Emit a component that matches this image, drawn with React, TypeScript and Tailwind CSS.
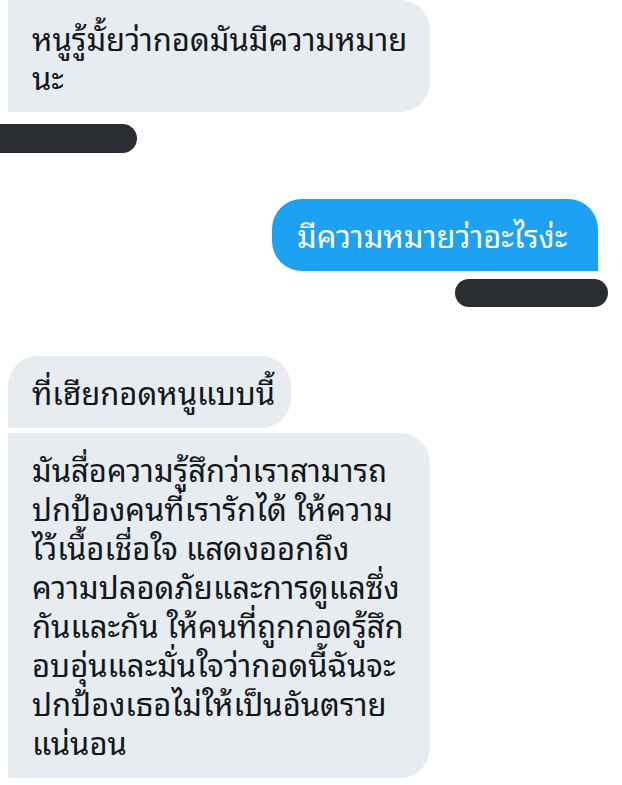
import React from "react";

const font = { fontFamily: '"Noto Sans Thai Looped", "Noto Serif Thai", Waree, Loma, Garuda, "Tlwg Typo", "Noto Sans Thai", "Noto Sans", sans-serif' };

function Lines({ lines }: { lines: string[] }) {
  return (
    <>
      {lines.map((l, i) => (
        <span key={i} className="block whitespace-nowrap">
          {l}
        </span>
      ))}
    </>
  );
}

export default function App() {
  return (
    <div
      className="w-[622px] h-[785px] bg-white overflow-hidden flex flex-col text-[31px] leading-[39px] text-[#14171a]"
      style={font}
    >
      <div className="ml-[8px] w-[422px] h-[112px] bg-[#e6ecf0] rounded-tr-[30px] rounded-br-[30px] px-[24px] pt-[18px]">
        <Lines lines={["หนูรู้มั้ยว่ากอดมันมีความหมาย", "นะ"]} />
      </div>
      <div className="mt-[12px] w-[137px] h-[29px] bg-[#292d31] rounded-r-full" />

      <div className="mt-[46px] self-end mr-[24px] w-[326px] h-[72px] bg-[#1da1f2] text-white rounded-tl-[30px] rounded-tr-[30px] rounded-bl-[30px] px-[25px] pt-[16px]">
        <Lines lines={["มีความหมายว่าอะไรง่ะ"]} />
      </div>
      <div className="mt-[8px] self-end mr-[14px] w-[153px] h-[28px] bg-[#292d31] rounded-full" />

      <div className="mt-[49px] ml-[8px] w-[283px] h-[72px] bg-[#e6ecf0] rounded-tl-[30px] rounded-tr-[30px] rounded-br-[30px] px-[24px] pt-[16px]">
        <Lines lines={["ที่เฮียกอดหนูแบบนี้"]} />
      </div>
      <div className="mt-[5px] ml-[8px] w-[422px] h-[345px] bg-[#e6ecf0] rounded-tr-[30px] rounded-br-[30px] px-[24px] pt-[16px]">
        <Lines
          lines={[
            "มันสื่อความรู้สึกว่าเราสามารถ",
            "ปกป้องคนที่เรารักได้ ให้ความ",
            "ไว้เนื้อเชื่อใจ แสดงออกถึง",
            "ความปลอดภัยและการดูแลซึ่ง",
            "กันและกัน ให้คนที่ถูกกอดรู้สึก",
            "อบอุ่นและมั่นใจว่ากอดนี้ฉันจะ",
            "ปกป้องเธอไม่ให้เป็นอันตราย",
            "แน่นอน",
          ]}
        />
      </div>
    </div>
  );
}
